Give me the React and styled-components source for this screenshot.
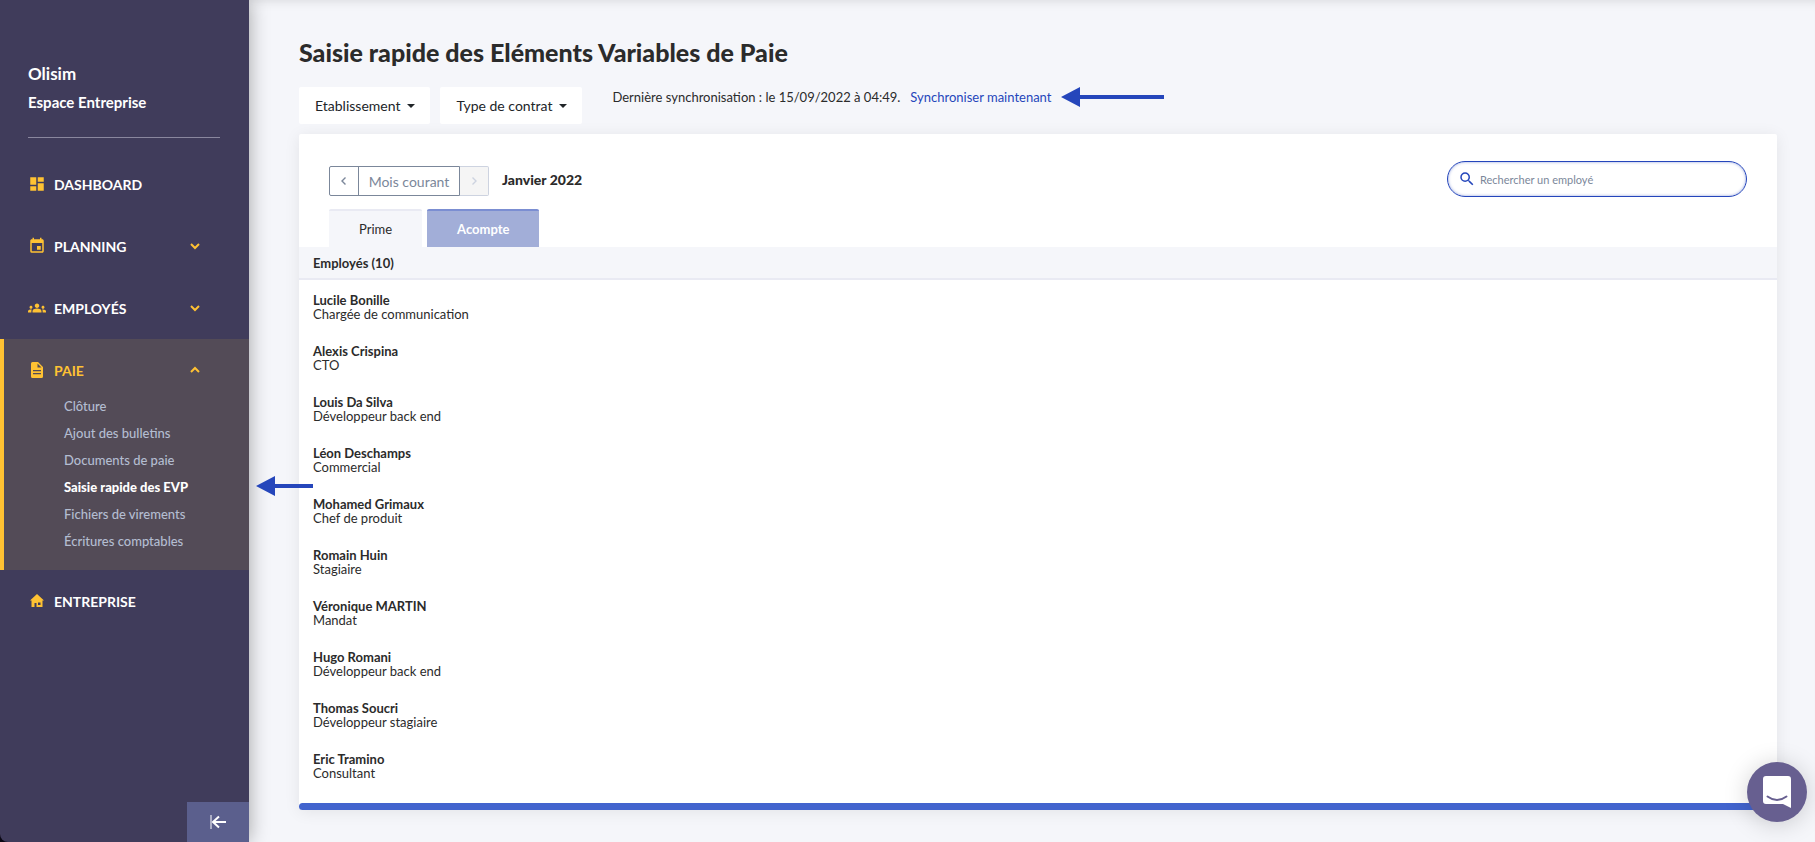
import React from "react";
import styled, { createGlobalStyle, css } from "styled-components";
import { MdDashboard, MdEvent, MdGroups, MdSearch } from "react-icons/md";

const Global = createGlobalStyle`
  * { box-sizing: border-box; }
  body { margin: 0; background: #f5f6fa; color: #2b2b2b; font-family: Lato, "Open Sans", sans-serif; }
  button, input { font-family: inherit; }
  a { text-decoration: none; }
`;

const Shell = styled.div`
  display: flex;
  min-height: 100vh;
  background: #0d0a18;
`;

const Sidebar = styled.aside`
  position: relative;
  z-index: 1;
  flex: 0 0 249px;
  display: flex;
  flex-direction: column;
  background: #403c5b;
  color: #fff;
  border-bottom-left-radius: 8px;
  box-shadow: 0 0 20px rgba(0, 0, 0, 0.35);
`;

const Brand = styled.div`
  margin: 59px 29px 15px 28px;
  padding-bottom: 20px;
  border-bottom: 1px solid #8a879e;
`;

const Company = styled.div`
  font-size: 17px;
  font-weight: 700;
  line-height: 29px;
`;

const Space = styled.div`
  font-size: 15px;
  font-weight: 700;
  line-height: 29px;
`;

const Section = styled.div`
  ${(p) =>
    p.$active &&
    css`
      background: #534b57;
      box-shadow: inset 4px 0 0 #ffc233;
      padding-bottom: 15px;
    `}
`;

const SectionLink = styled.a`
  display: flex;
  align-items: center;
  height: 62px;
  padding: 0 49px 0 28px;
  color: ${(p) => (p.$active ? "#ffc233" : "#fff")};
  font-size: 14px;
  font-weight: 700;
`;

const SectionIcon = styled.span`
  display: flex;
  width: 26px;
  color: #ffc233;
`;

const SectionName = styled.span`
  flex: 1;
`;

const Toggle = styled.span`
  display: flex;
  color: #ffc233;
`;

const SubList = styled.ul`
  list-style: none;
  margin: -8px 0 0;
  padding: 0 0 0 64px;
`;

const SubLink = styled.a`
  display: block;
  font-size: 13px;
  line-height: 27px;
  white-space: nowrap;
  color: ${(p) => (p.$current ? "#fff" : "#b3bdd1")};
  font-weight: ${(p) => (p.$current ? 900 : 500)};
`;

const Collapse = styled.button`
  display: flex;
  align-items: center;
  justify-content: center;
  width: 62px;
  height: 40px;
  margin: auto 0 0 auto;
  padding: 0;
  border: 0;
  background: #5b5f8d;
`;

const Main = styled.main`
  flex: 1;
  min-width: 0;
  padding: 36px 38px 32px 50px;
  background: #f5f6fa;
  box-shadow: inset 0 10px 12px -10px rgba(0, 0, 0, 0.14);
`;

const Title = styled.h1`
  margin: 0 0 19px;
  font-size: 25px;
  line-height: 32px;
  font-weight: 900;
`;

const Filters = styled.div`
  display: flex;
  gap: 10px;
  margin-bottom: 10px;
`;

const FilterButton = styled.button`
  display: flex;
  align-items: center;
  gap: 7px;
  height: 37px;
  padding: 0 15px 0 16px;
  border: 0;
  border-radius: 2px;
  background: #fff;
  color: #212529;
  font-size: 14px;
`;

const Caret = styled.span`
  border: 4px solid transparent;
  border-top-color: #212529;
  border-bottom: 0;
`;

const SyncBar = styled.div`
  display: flex;
  align-items: center;
  height: 20px;
  margin-left: 20px;
  font-size: 13px;
`;

const SyncLink = styled.a`
  margin: 0 10px;
  color: #2546bb;
`;

const Card = styled.section`
  background: #fff;
  border-radius: 2px 2px 4px 4px;
  box-shadow: 0 2px 16px rgba(0, 0, 0, 0.08);
`;

const Toolbar = styled.div`
  display: flex;
  align-items: center;
  justify-content: space-between;
  padding: 27px 30px 12px;
`;

const Period = styled.div`
  display: flex;
  align-items: center;
  gap: 13px;
  font-size: 14px;
  font-weight: 900;
`;

const MonthGroup = styled.div`
  display: flex;
  margin-top: 4px;
`;

const MonthButton = styled.button`
  display: flex;
  align-items: center;
  justify-content: center;
  width: ${(p) => (p.$wide ? "102px" : "30px")};
  height: 30px;
  padding: 0;
  border: 1px solid #7b879a;
  background: #fff;
  color: #7b879a;
  font-size: 14px;
  & + & { margin-left: -1px; }
  &:first-child { border-radius: 2px 0 0 2px; }
  &:last-child { border-radius: 0 2px 2px 0; }
  &:disabled {
    background: #f5f5f5;
    border-color: #cdd3e0;
    border-left-color: #7b879a;
    color: #cdd3e0;
  }
`;

const SearchBox = styled.label`
  display: flex;
  align-items: center;
  gap: 4px;
  width: 300px;
  height: 36px;
  padding: 0 16px 0 10px;
  border: 1px solid #2546bb;
  border-radius: 18px;
  box-shadow: inset 0 0 3px rgba(37, 70, 187, 0.5);
  color: #2546bb;
`;

const SearchInput = styled.input`
  flex: 1;
  min-width: 0;
  padding: 0;
  border: 0;
  outline: 0;
  background: none;
  font-size: 11px;
  &::placeholder { color: #7b879a; opacity: 1; }
`;

const Tabs = styled.div`
  display: flex;
  gap: 5px;
  padding: 0 30px;
`;

const Tab = styled.button`
  height: 38px;
  padding: 0 30px;
  border: 0;
  border-top: 2px solid ${(p) => (p.$selected ? "#7b8ed2" : "#e9eaf3")};
  border-radius: 2px 2px 0 0;
  background: ${(p) => (p.$selected ? "#a2aed8" : "#f5f6fa")};
  color: ${(p) => (p.$selected ? "#fff" : "#2b2b2b")};
  font-size: 13px;
  font-weight: ${(p) => (p.$selected ? 700 : 400)};
`;

const Table = styled.table`
  width: 100%;
  border-collapse: separate;
  border-spacing: 0;
`;

const HeadCell = styled.th`
  height: 33px;
  padding: 0 14px;
  border-bottom: 2px solid #e9eaf3;
  background: #f5f6fa;
  text-align: left;
  font-size: 13px;
  font-weight: 700;
`;

const EmployeeCell = styled.td`
  height: 51px;
  padding: 2px 14px 0;
  font-size: 13px;
  line-height: 14px;
`;

const Name = styled.div`
  font-weight: 700;
`;

const ScrollBar = styled.div`
  height: 7px;
  margin-top: 13px;
  border-radius: 4px;
  background: #4264ce;
`;

const ChatButton = styled.button`
  position: fixed;
  z-index: 2;
  right: 8px;
  bottom: 20px;
  display: flex;
  align-items: center;
  justify-content: center;
  width: 60px;
  height: 60px;
  padding: 0;
  border: 0;
  border-radius: 50%;
  background: #675f90;
  box-shadow: 0 2px 24px rgba(0, 0, 0, 0.18);
`;

const MenuPointer = styled.div`
  position: absolute;
  left: 256px;
  top: 476px;
  display: flex;
`;

const Arrow = ({ length }) => (
  <svg width={length} height="20" viewBox={`0 0 ${length} 20`} aria-hidden="true">
    <path d={`M0 10 19 0V8H${length}V12H19V20Z`} fill="#2546bb" />
  </svg>
);

const Chevron = ({ d, width = 2 }) => (
  <svg width="10" height="10" viewBox="0 0 10 10" fill="none" stroke="currentColor" strokeWidth={width} aria-hidden="true">
    <path d={d} />
  </svg>
);

const DocumentIcon = () => (
  <svg width="18" height="18" viewBox="0 0 18 18" aria-hidden="true">
    <path fill="currentColor" fillRule="evenodd" d="M4.500 1H10l5 5v9.500a1.500 1.500 0 0 1-1.500 1.500h-9A1.500 1.500 0 0 1 3 15.500v-13A1.500 1.500 0 0 1 4.500 1ZM9.500 2.500V6.500H13.500ZM5 9v1.200h8V9ZM5 12v1.200h8V12Z" />
  </svg>
);

const HouseIcon = () => (
  <svg width="18" height="18" viewBox="0 0 18 18" aria-hidden="true">
    <path fill="currentColor" fillRule="evenodd" d="M9 2 16 8.500H14.500V15H8.500V11H6.500V15H3.500V8.500H2ZM10 10.500V13H12.500V10.500Z" />
  </svg>
);

const sections = [
  { name: "DASHBOARD", icon: <MdDashboard size={18} /> },
  { name: "PLANNING", icon: <MdEvent size={18} />, expandable: true },
  { name: "EMPLOYÉS", icon: <MdGroups size={18} />, expandable: true },
  {
    name: "PAIE",
    icon: <DocumentIcon />,
    expandable: true,
    active: true,
    links: ["Clôture", "Ajout des bulletins", "Documents de paie", "Saisie rapide des EVP", "Fichiers de virements", "Écritures comptables"],
  },
  { name: "ENTREPRISE", icon: <HouseIcon /> },
];

const employees = [
  ["Lucile Bonille", "Chargée de communication"],
  ["Alexis Crispina", "CTO"],
  ["Louis Da Silva", "Développeur back end"],
  ["Léon Deschamps", "Commercial"],
  ["Mohamed Grimaux", "Chef de produit"],
  ["Romain Huin", "Stagiaire"],
  ["Véronique MARTIN", "Mandat"],
  ["Hugo Romani", "Développeur back end"],
  ["Thomas Soucri", "Développeur stagiaire"],
  ["Eric Tramino", "Consultant"],
];

export default function App() {
  return (
    <Shell>
      <Global />
      <Sidebar>
        <Brand>
          <Company>Olisim</Company>
          <Space>Espace Entreprise</Space>
        </Brand>
        <nav>
          {sections.map((s) => (
            <Section key={s.name} $active={s.active}>
              <SectionLink href="#" $active={s.active}>
                <SectionIcon>{s.icon}</SectionIcon>
                <SectionName>{s.name}</SectionName>
                {s.expandable && (
                  <Toggle>
                    <Chevron d={s.active ? "M1 7 5 3 9 7" : "M1 3 5 7 9 3"} />
                  </Toggle>
                )}
              </SectionLink>
              {s.links && (
                <SubList>
                  {s.links.map((l) => (
                    <li key={l}>
                      <SubLink href="#" $current={l === "Saisie rapide des EVP"}>{l}</SubLink>
                    </li>
                  ))}
                </SubList>
              )}
            </Section>
          ))}
        </nav>
        <Collapse aria-label="Réduire le menu">
          <svg width="16" height="16" viewBox="0 0 16 16" fill="none" stroke="#fff" aria-hidden="true">
            <path d="M1 1V15" strokeWidth="1" />
            <path d="M16 8H3M9 2.500 3 8 9 13.500" strokeWidth="2" />
          </svg>
        </Collapse>
        <MenuPointer>
          <Arrow length={57} />
        </MenuPointer>
      </Sidebar>
      <Main>
        <Title>Saisie rapide des Eléments Variables de Paie</Title>
        <Filters>
          <FilterButton>Etablissement <Caret /></FilterButton>
          <FilterButton>Type de contrat <Caret /></FilterButton>
          <SyncBar>
            <span>Dernière synchronisation : le 15/09/2022 à 04:49.</span>
            <SyncLink href="#">Synchroniser maintenant</SyncLink>
            <Arrow length={103} />
          </SyncBar>
        </Filters>
        <Card>
          <Toolbar>
            <Period>
              <MonthGroup>
                <MonthButton aria-label="Mois précédent"><Chevron d="M6.500 1.500 3 5 6.500 8.500" width={1.4} /></MonthButton>
                <MonthButton $wide>Mois courant</MonthButton>
                <MonthButton disabled aria-label="Mois suivant"><Chevron d="M3.500 1.500 7 5 3.500 8.500" width={1.4} /></MonthButton>
              </MonthGroup>
              <span>Janvier 2022</span>
            </Period>
            <SearchBox>
              <MdSearch size={18} />
              <SearchInput type="search" placeholder="Rechercher un employé" aria-label="Rechercher un employé" />
            </SearchBox>
          </Toolbar>
          <Tabs>
            <Tab>Prime</Tab>
            <Tab $selected>Acompte</Tab>
          </Tabs>
          <Table>
            <thead>
              <tr><HeadCell>Employés (10)</HeadCell></tr>
            </thead>
            <tbody>
              {employees.map(([name, role]) => (
                <tr key={name}>
                  <EmployeeCell>
                    <Name>{name}</Name>
                    {role}
                  </EmployeeCell>
                </tr>
              ))}
            </tbody>
          </Table>
          <ScrollBar />
        </Card>
      </Main>
      <ChatButton aria-label="Ouvrir la messagerie">
        <svg width="28" height="32" viewBox="0 0 28 32" aria-hidden="true">
          <path d="M3 0H25a3 3 0 0 1 3 3V32L20 28H3a3 3 0 0 1-3-3V3a3 3 0 0 1 3-3Z" fill="#fff" />
          <path d="M4.500 20.500Q14 27.500 23.500 20.500" fill="none" stroke="#675f90" strokeWidth="2" strokeLinecap="round" />
        </svg>
      </ChatButton>
    </Shell>
  );
}
